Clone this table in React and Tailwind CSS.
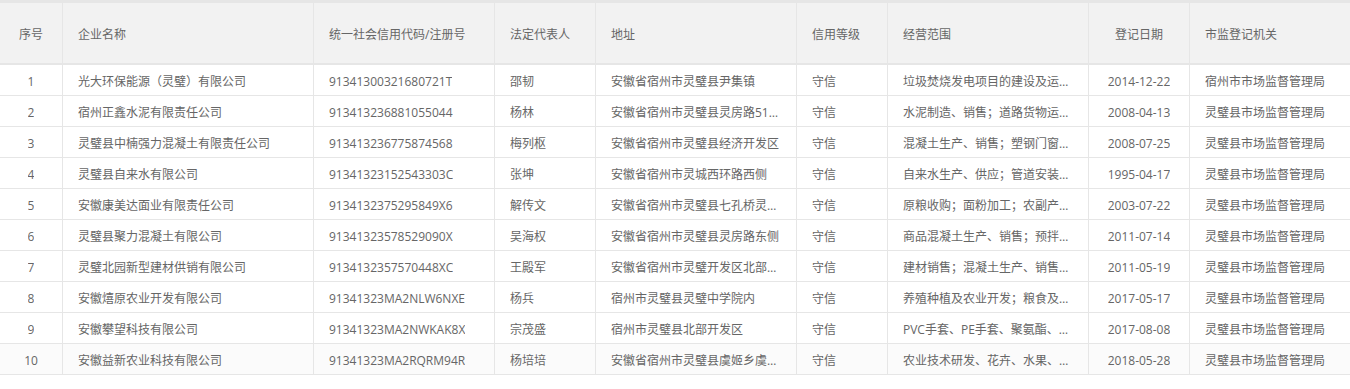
import React from "react";

const cols = "grid-cols-[63px_251px_181px_101px_201px_91px_201px_101px_160px]";

const headers = [
  { label: "序号", center: true },
  { label: "企业名称" },
  { label: "统一社会信用代码/注册号" },
  { label: "法定代表人" },
  { label: "地址" },
  { label: "信用等级" },
  { label: "经营范围" },
  { label: "登记日期", center: true },
  { label: "市监登记机关" },
];

const rows = [
  ["光大环保能源（灵璧）有限公司", "91341300321680721T", "邵韧", "安徽省宿州市灵璧县尹集镇", "垃圾焚烧发电项目的建设及运营管理", "2014-12-22", "宿州市市场监督管理局"],
  ["宿州正鑫水泥有限责任公司", "913413236881055044", "杨林", "安徽省宿州市灵璧县灵房路51号院内", "水泥制造、销售；道路货物运输（普通货运）", "2008-04-13", "灵璧县市场监督管理局"],
  ["灵璧县中楠强力混凝土有限责任公司", "913413236775874568", "梅列枢", "安徽省宿州市灵璧县经济开发区", "混凝土生产、销售；塑钢门窗制作、安装", "2008-07-25", "灵璧县市场监督管理局"],
  ["灵璧县自来水有限公司", "91341323152543303C", "张坤", "安徽省宿州市灵城西环路西侧", "自来水生产、供应；管道安装维修", "1995-04-17", "灵璧县市场监督管理局"],
  ["安徽康美达面业有限责任公司", "9134132375295849X6", "解传文", "安徽省宿州市灵璧县七孔桥灵泗路", "原粮收购；面粉加工；农副产品销售", "2003-07-22", "灵璧县市场监督管理局"],
  ["灵璧县聚力混凝土有限公司", "91341323578529090X", "吴海权", "安徽省宿州市灵璧县灵房路东侧", "商品混凝土生产、销售；预拌砂浆", "2011-07-14", "灵璧县市场监督管理局"],
  ["灵璧北园新型建材供销有限公司", "91341323575704 48XC".replace(" ", ""), "王殿军", "安徽省宿州市灵璧开发区北部园区", "建材销售；混凝土生产、销售；运输", "2011-05-19", "灵璧县市场监督管理局"],
  ["安徽熺原农业开发有限公司", "91341323MA2NLW6NXE", "杨兵", "宿州市灵璧县灵璧中学院内", "养殖种植及农业开发；粮食及农产品", "2017-05-17", "灵璧县市场监督管理局"],
  ["安徽攀望科技有限公司", "91341323MA2NWKAK8X", "宗茂盛", "宿州市灵璧县北部开发区", "PVC手套、PE手套、聚氨酯、手套生产", "2017-08-08", "灵璧县市场监督管理局"],
  ["安徽益新农业科技有限公司", "91341323MA2RQRM94R", "杨培培", "安徽省宿州市灵璧县虞姬乡虞姬村", "农业技术研发、花卉、水果、蔬菜种植", "2018-05-28", "灵璧县市场监督管理局"],
];

const Cell = ({ children, center, last }) => (
  <div
    className={`flex items-center px-[15px] pt-[3px] min-w-0 ${center ? "justify-center" : ""} ${
      last ? "" : "border-r border-[#e6e6e6]"
    }`}
  >
    <span className="truncate block">{children}</span>
  </div>
);

export default function App() {
  return (
    <div
      className="w-[1350px] h-[389px] bg-white text-[12px] text-[#666] overflow-hidden"
      style={{ fontFamily: '"Open Sans", "Noto Sans CJK SC", sans-serif' }}
    >
      <div className="border-t-[3px] border-[#e6e6e6]">
        {/* header */}
        <div className={`grid ${cols} h-[62px] bg-[#f2f2f2] border-b-2 border-[#e6e6e6]`}>
          {headers.map((h, i) => (
            <Cell key={h.label} center={h.center} last={i === headers.length - 1}>
              {h.label}
            </Cell>
          ))}
        </div>

        {/* body */}
        {rows.map((r, idx) => (
          <div
            key={idx}
            className={`grid ${cols} h-[31px] border-b border-[#e6e6e6] ${
              idx === rows.length - 1 ? "bg-[#fbfbfb]" : "bg-white"
            }`}
          >
            <Cell center>{idx + 1}</Cell>
            <Cell>{r[0]}</Cell>
            <Cell>{r[1]}</Cell>
            <Cell>{r[2]}</Cell>
            <Cell>{r[3]}</Cell>
            <Cell>守信</Cell>
            <Cell>{r[4]}</Cell>
            <Cell center>{r[5]}</Cell>
            <Cell last>{r[6]}</Cell>
          </div>
        ))}
      </div>
    </div>
  );
}
